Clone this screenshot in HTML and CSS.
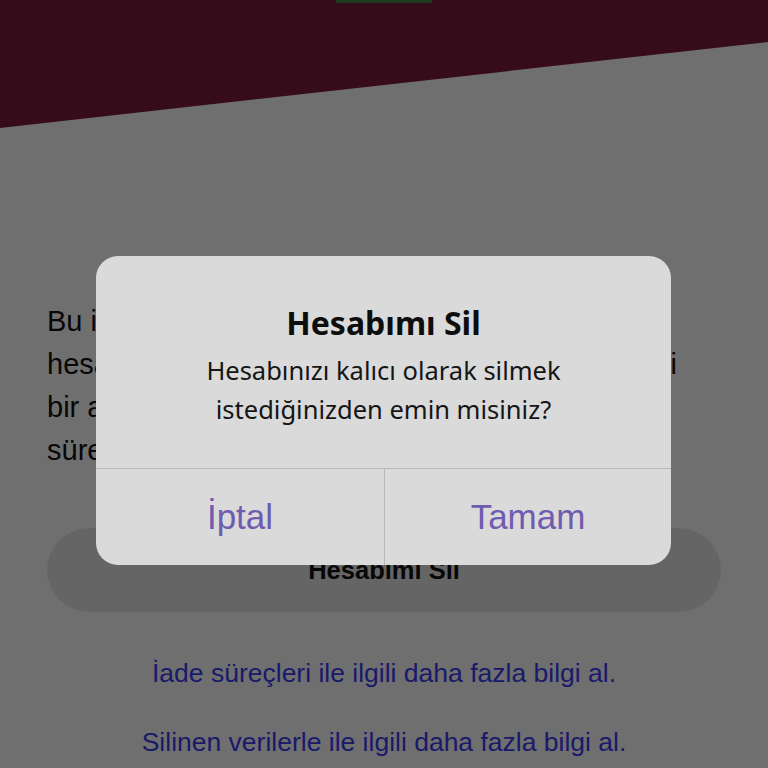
FILE: index.html
```html
<!DOCTYPE html>
<html lang="tr">
<head>
<meta charset="utf-8">
<title>Hesabımı Sil</title>
<link rel="stylesheet" href="styles.css">
</head>
<body>
<div class="page">
  <header class="hero">
    <div class="hero-tab"></div>
  </header>
  <main class="content">
    <p class="info">
      <span class="ln">Bu işlem geri alınamaz ve tüm bilgileriniz</span>
      <span class="ln ln-full">hesabınız kalıcı olarak silinir ve tüm ilgili</span>
      <span class="ln">bir arada tutan hesabınızın silinme</span>
      <span class="ln">süreci birkaç gün içinde tamamlanır.</span>
    </p>
    <button class="delete-btn">Hesabımı Sil</button>
    <a class="link first" href="#">İade süreçleri ile ilgili daha fazla bilgi al.</a>
    <a class="link" href="#">Silinen verilerle ile ilgili daha fazla bilgi al.</a>
  </main>
</div>
<div class="overlay"></div>
<div class="dialog">
  <div class="dialog-body">
    <h2 class="dialog-title">Hesabımı Sil</h2>
    <p class="dialog-msg">Hesabınızı kalıcı olarak silmek<br>istediğinizden emin misiniz?</p>
  </div>
  <div class="dialog-actions">
    <button class="action">İptal</button>
    <button class="action">Tamam</button>
  </div>
</div>
</body>
</html>
```

FILE: styles.css
```css
html, body {
  margin: 0;
  padding: 0;
  background: #ffffff;
  width: 768px;
  height: 768px;
  overflow: hidden;
}
body {
  font-family: "Liberation Sans", Arial, sans-serif;
  position: relative;
}
.page {
  display: flex;
  flex-direction: column;
}
.hero {
  height: 128px;
  background: #7c1c3e;
  clip-path: polygon(0 0, 100% 0, 100% 42px, 0 128px);
  display: flex;
  justify-content: center;
}
.hero-tab {
  width: 96px;
  height: 3px;
  background: #458a45;
}
.content {
  padding: 0 47px;
  display: flex;
  flex-direction: column;
}
.info {
  margin: 172px 0 0;
  font-size: 29px;
  line-height: 43px;
  color: #111;
  white-space: nowrap;
}
.ln {
  display: block;
}
.ln-full {
  width: 630px;
  white-space: normal;
  text-align: justify;
  text-align-last: justify;
}
.delete-btn {
  margin-top: 56px;
  height: 84px;
  border: none;
  border-radius: 42px;
  background: #e8e8e8;
  font-family: "Liberation Sans", Arial, sans-serif;
  font-weight: 700;
  font-size: 25.5px;
  color: #111;
}
.link {
  display: block;
  text-align: center;
  font-size: 26.5px;
  line-height: 30px;
  color: #3c3cf4;
  text-decoration: none;
}
.link.first {
  margin-top: 46px;
}
.link + .link {
  margin-top: 39px;
}
.overlay {
  position: absolute;
  inset: 0;
  background: rgba(0, 0, 0, 0.565);
}
.dialog {
  position: absolute;
  top: 256px;
  left: 96px;
  width: 575px;
  height: 309px;
  background: #dadada;
  border-radius: 22px;
  overflow: hidden;
  display: flex;
  flex-direction: column;
}
.dialog-body {
  padding: 47px 20px 0;
  text-align: center;
  flex: 1;
}
.dialog-title {
  margin: 0;
  font-family: "Noto Sans", sans-serif;
  font-weight: 700;
  font-size: 32px;
  line-height: 40px;
  color: #0d0d0d;
}
.dialog-msg {
  margin: 8px 0 0;
  font-family: "Noto Sans", sans-serif;
  font-size: 25.5px;
  line-height: 39px;
  color: #151515;
}
.dialog-actions {
  height: 96px;
  border-top: 1px solid #b8b8b8;
  display: grid;
  grid-template-columns: 288px 1fr;
}
.action {
  border: none;
  background: transparent;
  font-family: "Liberation Sans", Arial, sans-serif;
  font-size: 35px;
  color: #6f5cb0;
  padding: 0;
}
.action + .action {
  border-left: 1px solid #b8b8b8;
}
```
